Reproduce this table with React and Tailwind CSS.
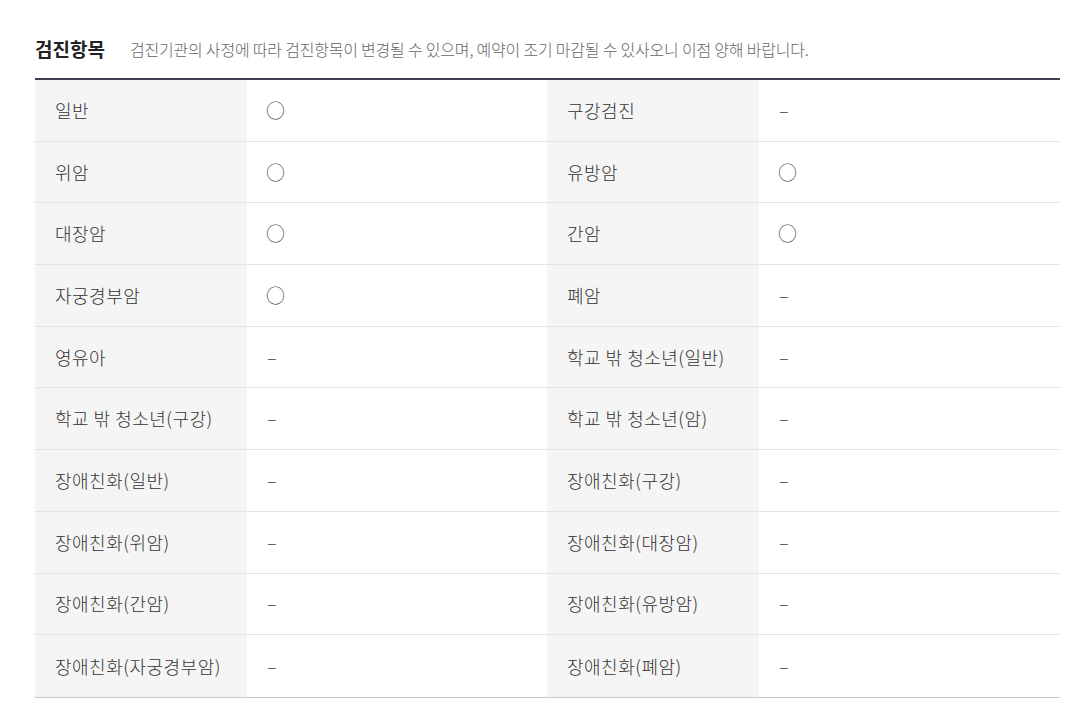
const rows = [
  ["일반", "○", "구강검진", "–"],
  ["위암", "○", "유방암", "○"],
  ["대장암", "○", "간암", "○"],
  ["자궁경부암", "○", "폐암", "–"],
  ["영유아", "–", "학교 밖 청소년(일반)", "–"],
  ["학교 밖 청소년(구강)", "–", "학교 밖 청소년(암)", "–"],
  ["장애친화(일반)", "–", "장애친화(구강)", "–"],
  ["장애친화(위암)", "–", "장애친화(대장암)", "–"],
  ["장애친화(간암)", "–", "장애친화(유방암)", "–"],
  ["장애친화(자궁경부암)", "–", "장애친화(폐암)", "–"],
];

function Cell({ head, value }) {
  return (
    <>
      <div className="w-[212px] bg-[#f5f5f5] pl-5 flex items-center text-[18px] font-light tracking-[0.5px] text-[#333]">{head}</div>
      <div className={`w-[300px] bg-white flex items-center text-[#444] font-light ${value === "○" ? 'pl-[19px] text-[19px]' : 'pl-[20px] text-[18px]'}`}>{value}</div>
    </>
  );
}

export default function App() {
  return (
    <div className="bg-white w-[1092px] h-[709px] pt-[34px] pl-[35px]" style={{ fontFamily: '"Noto Sans CJK KR", "Noto Sans", sans-serif' }}>
      <div className="flex items-center h-[30px] mb-[14px]">
        <h3 className="text-[19px] font-bold text-[#222]">검진항목</h3>
        <p className="ml-[25px] text-[16px] font-light text-[#666] tracking-[-0.2px]">
          검진기관의 사정에 따라 검진항목이 변경될 수 있으며, 예약이 조기 마감될 수 있사오니 이점 양해 바랍니다.
        </p>
      </div>
      <div className="w-[1025px] border-t-2 border-[#3f3f52] border-b border-b-[#c8c8c8]">
        {rows.map((r, i) => (
          <div key={i} className={`flex h-[61.7px] ${i < rows.length - 1 ? 'border-b border-[#e4e4e4]' : ''}`}>
            <Cell head={r[0]} value={r[1]} />
            <Cell head={r[2]} value={r[3]} />
          </div>
        ))}
      </div>
    </div>
  );
}
